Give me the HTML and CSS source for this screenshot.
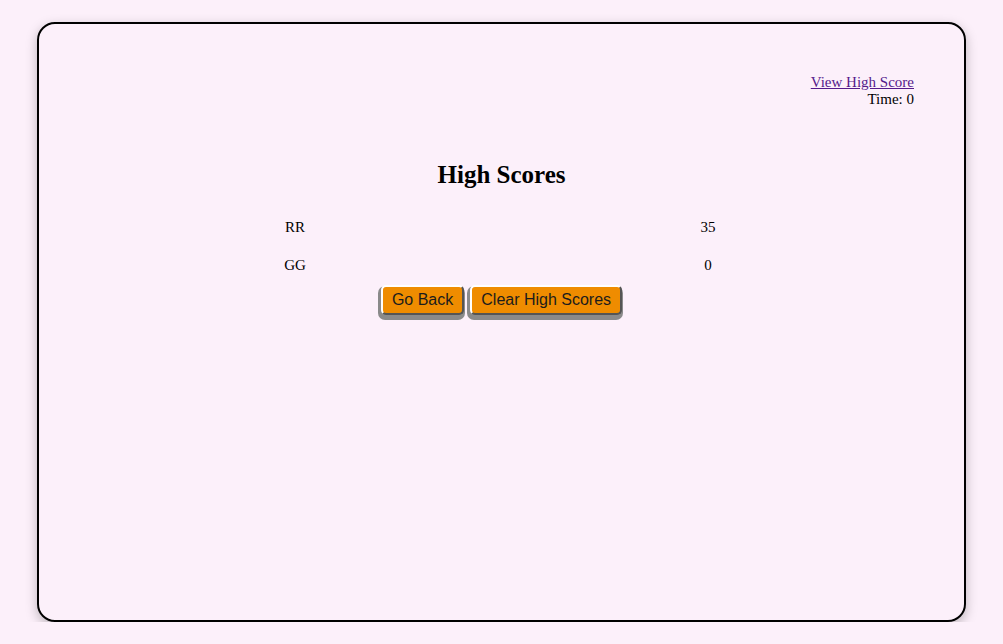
FILE: index.html
```html
<!DOCTYPE html>
<html>
<head>
<meta charset="utf-8">
<link rel="stylesheet" href="styles.css">
</head>
<body>
<main class="card">
  <header class="top">
    <a class="hs-link" href="#">View High Score</a>
    <div class="timer">Time: 0</div>
  </header>
  <h2 class="title">High Scores</h2>
  <div class="scores">
    <div class="row"><span>RR</span><span>35</span></div>
    <div class="row"><span>GG</span><span>0</span></div>
  </div>
  <div class="actions">
    <button class="btn">Go Back</button>
    <button class="btn">Clear High Scores</button>
  </div>
</main>
</body>
</html>
```

FILE: styles.css
```css
html, body {
  margin: 0;
  padding: 0;
  background: #fcf0fa;
  font-family: "Liberation Serif", "Times New Roman", serif;
  color: #000;
}
body {
  padding-top: 22px;
}
.card {
  box-sizing: border-box;
  width: 929px;
  height: 600px;
  margin: 0 0 0 37px;
  border: 2px solid #000;
  border-radius: 18px;
  box-shadow: 0 4px 12px rgba(0, 0, 0, 0.25);
  padding: 50px 50px 0 50px;
  display: flex;
  flex-direction: column;
}
.top {
  display: flex;
  flex-direction: column;
  align-items: flex-end;
  font-size: 15px;
  line-height: 17px;
}
.hs-link {
  color: #551a8b;
  text-decoration: underline;
}
.title {
  margin: 53px 0 0;
  text-align: center;
  font-size: 25px;
  line-height: 28px;
  font-weight: bold;
}
.scores {
  margin-top: 19px;
  display: flex;
  flex-direction: column;
  align-items: center;
  font-size: 15px;
}
.row {
  display: grid;
  grid-template-columns: 413px 413px;
  height: 38px;
  align-items: center;
  text-align: center;
}
.actions {
  margin-top: 1px;
  display: flex;
  justify-content: center;
  gap: 6px;
}
.btn {
  box-sizing: border-box;
  height: 30px;
  padding: 0 9px;
  font-family: "Liberation Sans", Arial, sans-serif;
  font-size: 16px;
  color: #1c1c1c;
  background: #ef8c00;
  border: 2px solid;
  border-color: #fff #555 #555 #fff;
  border-radius: 5px;
  box-shadow: -1px 3px 0 2px #8a8a8a;
  cursor: pointer;
}
```
